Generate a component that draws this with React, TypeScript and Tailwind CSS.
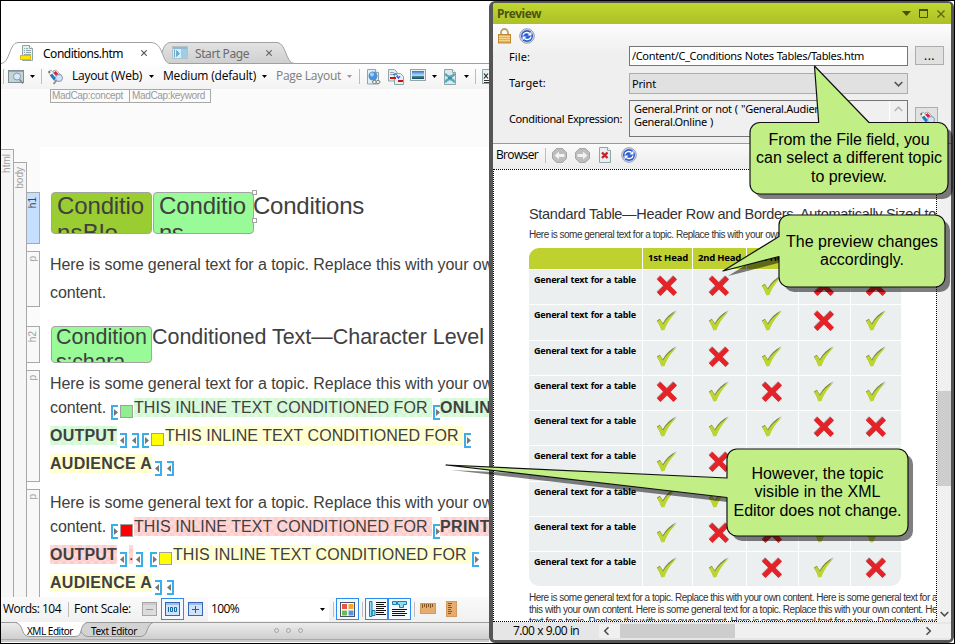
import { useLayoutEffect, useRef, useState } from "react";
import type { ReactNode } from "react";

const NOTO = "font-['Noto_Sans',sans-serif]";
const OPEN = "font-['Open_Sans',sans-serif]";

/* A single line of text whose tracking is computed so that it spans w pixels. */
function Fit({ w, children, className = "" }: { w: number; children: string; className?: string }) {
  const ref = useRef<HTMLSpanElement>(null);
  const [spacing, setSpacing] = useState(0);
  useLayoutEffect(() => {
    if (ref.current) {
      setSpacing((w - ref.current.getBoundingClientRect().width) / children.length);
    }
  }, [w, children]);
  return (
    <span className={`block shrink-0 whitespace-pre ${className}`} style={{ width: w }}>
      <span ref={ref} style={{ letterSpacing: spacing }}>
        {children}
      </span>
    </span>
  );
}

function Caret({ color = "#000", className = "" }: { color?: string; className?: string }) {
  return (
    <svg className={`shrink-0 ${className}`} width="5" height="3" viewBox="0 0 5 3">
      <path d="M0 0h5L2.5 3z" fill={color} />
    </svg>
  );
}

function Sep({ className = "" }: { className?: string }) {
  return <div className={`h-[15px] w-px shrink-0 bg-[#bdbdbd] ${className}`} />;
}

/* ---------- icons ---------- */

function PageIcon() {
  return (
    <svg className="shrink-0" width="14" height="17" viewBox="0 0 14 17">
      <path d="M2.5.5h7l3 3v12h-10z" fill="#e3eff0" stroke="#8fa5a8" />
      <path d="M9.5.5v3h3" fill="#fff" stroke="#8fa5a8" />
      <path d="M4 3.5h1M6 3.5h2M4 5.5h1M6 5.5h5M4 7.5h1M6 7.5h5M4 9.5h7" stroke="#93a6aa" />
      <rect x=".5" y="10.500" width="10" height="4" fill="#ffe600" stroke="#f0b400" />
    </svg>
  );
}

function StartIcon() {
  return (
    <svg className="shrink-0" width="16" height="13" viewBox="0 0 16 13">
      <rect x=".5" y=".5" width="15" height="12" fill="#c5d5dc" stroke="#b4c2c8" />
      <rect x="1" y="1" width="14" height="2" fill="#8fb8d4" />
      <rect x="1" y="3" width="8" height="9" fill="#d5edf8" />
      <rect x="9" y="3" width="6" height="9" fill="#9fcde4" />
      <path d="M2.500 3.500v8M4.500 4.500l3 3-3 3z" fill="#6aaed2" stroke="#6aaed2" />
    </svg>
  );
}

function FindIcon() {
  return (
    <svg className="shrink-0" width="17" height="16" viewBox="0 0 17 16">
      <rect x=".5" y="1.500" width="15" height="12" fill="#c3d3d6" stroke="#7d8f93" />
      <path d="M1 2.500h14" stroke="#94a6aa" />
      <circle cx="9" cy="7.500" r="3.500" fill="#d5eafc" stroke="#8b9aa2" />
      <path d="M11.500 10.500l3.500 4" stroke="#888" strokeWidth="1.600" />
    </svg>
  );
}

function TagsIcon() {
  return (
    <svg className="shrink-0" width="17" height="16" viewBox="0 0 17 16">
      <path d="M1 3l3-2 7 8-3 3z" fill="#fff" stroke="#999" strokeWidth=".8" />
      <path d="M6 2l3-1 6 6-3 3z" fill="#fff" stroke="#999" strokeWidth=".8" />
      <path d="M4 5.500l4 5" stroke="#2179c9" strokeWidth="3" />
      <path d="M7.500 3l4 4" stroke="#e0203a" strokeWidth="3" />
      <circle cx="2.500" cy="3" r="1" fill="#666" />
      <circle cx="12" cy="9" r="3.500" fill="#cfe4fa" stroke="#8c9aab" />
      <path d="M9.500 11.500L6.500 15" stroke="#888" strokeWidth="1.800" />
    </svg>
  );
}

function GlobePageIcon() {
  return (
    <svg className="shrink-0" width="14" height="16" viewBox="0 0 14 16">
      <path d="M.5.500h8l3 3v11.500h-11z" fill="#e3eff0" stroke="#8fa5a8" />
      <path d="M8.500.5v3h3" fill="#fff" stroke="#8fa5a8" />
      <circle cx="6" cy="7" r="4.500" fill="#4a92dc" />
      <circle cx="5" cy="5.500" r="2" fill="#a5d0f7" />
      <ellipse cx="7.500" cy="13" rx="2" ry="1.500" fill="#fff" stroke="#777" />
      <ellipse cx="11" cy="13" rx="2" ry="1.500" fill="#fff" stroke="#777" />
    </svg>
  );
}

function CopyIcon() {
  return (
    <svg className="shrink-0" width="16" height="16" viewBox="0 0 16 16">
      <path d="M.5.500h6l2.500 2.500v9h-8.500z" fill="#e3eff0" stroke="#8fa5a8" />
      <path d="M6.500 4.500h6l3 3v8h-9z" fill="#e3eff0" stroke="#8fa5a8" />
      <path d="M2 8h6v2H2zM10 11h5v2h-5z" fill="#d01111" />
      <path d="M2 3.500h4M2 5.500h4" stroke="#8fa5a8" />
      <path d="M5 6c2-1.500 4-1.500 5.500 3M8.500 7l2 2.500 1.500-2.500" fill="none" stroke="#2443c4" />
    </svg>
  );
}

function ImageIcon() {
  return (
    <svg className="shrink-0" width="16" height="12" viewBox="0 0 16 12">
      <defs>
        <linearGradient id="sky" x1="0" y1="0" x2="0" y2="1">
          <stop offset="0" stopColor="#2f6fe0" />
          <stop offset=".55" stopColor="#bfe0f7" />
          <stop offset=".62" stopColor="#4c9a8c" />
          <stop offset="1" stopColor="#1c3f6a" />
        </linearGradient>
      </defs>
      <rect x=".5" y=".5" width="15" height="11" fill="#e9f0f0" stroke="#8fa5a8" />
      <rect x="2" y="2" width="12" height="8" fill="url(#sky)" />
    </svg>
  );
}

function XPageIcon() {
  return (
    <svg className="shrink-0" width="12" height="16" viewBox="0 0 12 16">
      <path d="M.5.500h8l3 3v12H.5z" fill="#dbe9ea" stroke="#8fa5a8" />
      <path d="M8.500.5v3h3" fill="#fff" stroke="#8fa5a8" />
      <path d="M1.500 4.500c1 4 7.500 4 9 0M1.500 13.500c1-4.500 7.500-4.500 9 0" fill="none" stroke="#55a9bb" strokeWidth="2.200" />
      <path d="M4 9h4" stroke="#3d8fa3" strokeWidth="2" />
    </svg>
  );
}

function XLinesIcon() {
  return (
    <svg className="shrink-0" width="7" height="16" viewBox="0 0 7 16">
      <path d="M.5 15V.5H7M.5 14.500H7" stroke="#8fa5a8" fill="#e3eff0" />
      <path d="M2 4.500l4 5M6 4.500l-4 5" stroke="#222" strokeWidth="1.200" />
      <path d="M2 11.500h5M2 13.500h5" stroke="#333" />
    </svg>
  );
}

function LockIcon() {
  return (
    <svg className="shrink-0" width="13" height="16" viewBox="0 0 13 16">
      <path d="M3 8V4.500a3.500 3.500 0 017 0V8" fill="none" stroke="#b9a06a" strokeWidth="1.800" />
      <rect x=".5" y="6.500" width="12" height="8.500" fill="#e6b04c" stroke="#c08a35" />
      <path d="M1 8.500h11M1 10.500h11M1 12.500h11" stroke="#f6d58c" />
    </svg>
  );
}

function RefreshIcon() {
  return (
    <svg className="shrink-0" width="16" height="16" viewBox="0 0 16 16">
      <circle cx="8" cy="8" r="7.300" fill="#d3d7e2" stroke="#999fae" strokeWidth="1" />
      <circle cx="8" cy="8" r="6" fill="#2d5fd2" />
      <path d="M4 7.500C4.500 4.500 8.500 3.500 10.500 5.500" fill="none" stroke="#fff" strokeWidth="1.500" />
      <path d="M12.500 3.500v4h-4z" fill="#fff" />
      <path d="M12 8.500c-.5 3-4.500 4-6.500 2" fill="none" stroke="#fff" strokeWidth="1.500" />
      <path d="M3.500 12.500v-4h4z" fill="#fff" />
    </svg>
  );
}

function NavIcon({ flip = false }: { flip?: boolean }) {
  return (
    <svg className={`shrink-0 ${flip ? "-scale-x-100" : ""}`} width="15" height="15" viewBox="0 0 15 15">
      <path d="M4.500.5h6l4 4v6l-4 4h-6l-4-4v-6z" fill="#bdbdbd" stroke="#a6a6a6" />
      <path d="M2.500 7.500L7 3.500v2.500h5.500v3H7v2.500z" fill="#f2f2f2" />
    </svg>
  );
}

function StopPageIcon() {
  return (
    <svg className="shrink-0" width="12" height="16" viewBox="0 0 12 16">
      <path d="M.5.500h8l3 3v12H.5z" fill="#e6f0f2" stroke="#8fa5a8" />
      <path d="M8.500.5v3h3" fill="#fff" stroke="#8fa5a8" />
      <path d="M3 5.500l5.500 5.500M8.500 5.500L3 11" stroke="#c8202a" strokeWidth="2.400" />
    </svg>
  );
}

function Cross() {
  return (
    <svg className="-ml-px" width="22" height="22" viewBox="0 0 22 22">
      <path
        d="M4.500 1L11 7.500 17.500 1 21 4.500 14.500 11 21 17.500 17.500 21 11 14.500 4.500 21 1 17.500 7.500 11 1 4.500z"
        fill="#6a1a1a"
        opacity=".45"
        transform="translate(-.5 -.7)"
      />
      <path d="M4.500 1L11 7.500 17.500 1 21 4.500 14.500 11 21 17.500 17.500 21 11 14.500 4.500 21 1 17.500 7.500 11 1 4.500z" fill="#e42328" />
    </svg>
  );
}

function Check() {
  return (
    <svg className="-ml-px" width="22" height="22" viewBox="0 0 22 22">
      <path d="M1 11.500L4 9.500 7 14C10 8.500 14.500 4 21 1 15.500 5.500 11.500 11.500 8.500 20L5.500 20.500C4.500 17 3 14 1 11.500z" fill="#4e5a10" opacity=".7" transform="translate(-.2 -.7)" />
      <path d="M1 11.500L4 9.500 7 14.500C10 9 14.500 5 21 1.500 15.500 6.500 11.500 12 8.500 20L5.500 20.500C4.500 17 3 14 1 11.500z" fill="#bdd52f" />
    </svg>
  );
}

/* ---------- XML editor ---------- */

function DocTabs() {
  return (
    <div className={`relative mt-[41px] h-[22px] ${NOTO} text-[12px] leading-[16px]`}>
      <svg className="absolute left-0 top-0" width="488" height="22" viewBox="1 42 488 22">
        <defs>
          <linearGradient id="tab" x1="0" y1="0" x2="0" y2="1">
            <stop offset="0" stopColor="#e3e3e3" />
            <stop offset="1" stopColor="#cfcfcf" />
          </linearGradient>
        </defs>
        <path d="M162 52.500C164 46 166 42.500 171 42.500H277C286 42.500 286 63.500 294 63.500H170C166 63.500 164 58 162 52.500z" fill="url(#tab)" stroke="#a0a0a0" />
        <path d="M294 63.500H489" stroke="#a0a0a0" />
        <path d="M1 63.500C10 63.500 9 42.500 18 42.500H150C158 42.500 160 48 162 52.500" fill="none" stroke="#a0a0a0" />
      </svg>
      <div className="relative flex h-full items-start">
        <div className="ml-[19px] mt-[3px] flex"><PageIcon /></div>
        <Fit w={80} className="ml-[9px] mt-[4px] text-black">Conditions.htm</Fit>
        <svg className="ml-[18px] mt-[8px]" width="6" height="6" viewBox="0 0 6 6"><path d="M.3.300l5.400 5.400M5.700.300L.300 5.700" stroke="#555" strokeWidth="1.200" /></svg>
        <div className="ml-[25px] mt-[4px] flex"><StartIcon /></div>
        <Fit w={54} className="ml-[7px] mt-[4px] text-[#6b6b6b]">Start Page</Fit>
        <svg className="ml-[17px] mt-[8px]" width="6" height="6" viewBox="0 0 6 6"><path d="M.3.300l5.400 5.400M5.700.300L.300 5.700" stroke="#666" strokeWidth="1.200" /></svg>
      </div>
    </div>
  );
}

function Toolbar() {
  return (
    <div className={`flex h-[25px] items-center overflow-hidden bg-linear-to-b from-white to-[#f2f2f2] ${OPEN} text-[12px] leading-[16px] text-black`}>
      <Sep className="ml-[2px]" />
      <div className="ml-[4px] flex"><FindIcon /></div>
      <Caret className="ml-[5px]" />
      <Sep className="ml-[6px]" />
      <div className="ml-[5px] flex"><TagsIcon /></div>
      <Fit w={70} className="ml-[8px] -mt-px">Layout (Web)</Fit>
      <Caret className="ml-[7px]" />
      <Fit w={93} className="ml-[9px] -mt-px">Medium (default)</Fit>
      <Caret className="ml-[6px]" />
      <Fit w={65} className="ml-[9px] -mt-px text-[#7d7d7d]">Page Layout</Fit>
      <Caret className="ml-[6px]" color="#999" />
      <Sep className="ml-[7px]" />
      <div className="ml-[7px] flex"><GlobePageIcon /></div>
      <div className="ml-[7px] flex"><CopyIcon /></div>
      <div className="-mt-[4px] ml-[6px] flex"><ImageIcon /></div>
      <Caret className="ml-[6px]" />
      <div className="ml-[7px] flex"><XPageIcon /></div>
      <Caret className="ml-[8px]" />
      <Sep className="ml-[6px]" />
      <div className="ml-[6px] flex"><XLinesIcon /></div>
    </div>
  );
}

function BlockTag({ label, className }: { label: string; className: string }) {
  return (
    <div className={`flex w-full justify-center border-[#a8a8a8] pt-[4px] text-[10px] leading-[12px] ${className}`}>
      <span className="h-fit rotate-180 [writing-mode:vertical-rl]">{label}</span>
    </div>
  );
}

function Bracket({ close = false, className = "" }: { close?: boolean; className?: string }) {
  return (
    <svg className={`mt-[11px] shrink-0 ${close ? "-scale-x-100" : ""} ${className}`} width="7" height="15" viewBox="0 0 7 15">
      <path d="M7 1H1v13h6" fill="none" stroke="#3aaeea" strokeWidth="2" />
      <path d="M3 4l4 3.500L3 11z" fill="#777" />
    </svg>
  );
}

function Swatch({ className }: { className: string }) {
  return <div className={`mt-[11px] h-[13px] w-[13px] shrink-0 border border-[#a0a0a0] ${className}`} />;
}

function Mark({ w, text, bold = false, className }: { w: number; text: string; bold?: boolean; className: string }) {
  return (
    <div className={`mt-[4px] h-[19px] shrink-0 leading-[20px] ${bold ? "font-bold" : ""} ${className}`}>
      <Fit w={w}>{text}</Fit>
    </div>
  );
}

const GREEN = "bg-[repeating-conic-gradient(#d3f8d3_0_25%,#dcfadc_0_50%)] bg-[size:8px_8px]";
const YELLOW = "bg-[repeating-conic-gradient(#ffffcc_0_25%,#ffffd9_0_50%)] bg-[size:8px_8px]";
const RED = "bg-[repeating-conic-gradient(#ffcccc_0_25%,#ffd8d8_0_50%)] bg-[size:8px_8px]";

function Chip({ children, className }: { children: ReactNode; className: string }) {
  return <div className={`w-[101px] shrink-0 overflow-hidden rounded-[4px] border border-[#a3a3a3] ${className}`}>{children}</div>;
}

const LINE = "Here is some general text for a topic. Replace this with your own";

function Editor() {
  return (
    <div className="flex h-[508px] overflow-hidden bg-[#fbfbfb] font-['Liberation_Sans',Arial,sans-serif] text-[#a0a0a0]">
      <div className="flex w-[13px] shrink-0 flex-col pt-[60px]">
        <BlockTag label="html" className="flex-1 border-r border-t bg-[#f6f6f6]" />
      </div>
      <div className="flex w-[13px] shrink-0 flex-col pt-[73px]">
        <BlockTag label="body" className="flex-1 border-r border-t bg-[#f6f6f6]" />
      </div>
      <div className="flex w-[13px] shrink-0 flex-col gap-[7px] pt-[103px]">
        <BlockTag label="h1" className="h-[52px] border-y border-r bg-[#c4dfff] text-[#444]" />
        <BlockTag label="p" className="h-[56px] border-y border-r bg-[#f8f8f8]" />
        <BlockTag label="h2" className="mt-[12px] h-[37px] border-y border-r bg-[#f8f8f8]" />
        <BlockTag label="p" className="h-[112px] border-y border-r bg-[#f8f8f8]" />
        <BlockTag label="p" className="flex-1 border-r border-t bg-[#f8f8f8]" />
      </div>
      <div className="flex min-w-0 flex-1 flex-col overflow-hidden">
        <div className="flex h-[58px] shrink-0 items-start pl-[10px] text-[10px] leading-[12px] text-[#999]">
          <div className="h-[14px] w-[80px] border border-[#a8a8a8] pl-[1px]"><Fit w={71}>MadCap:concept</Fit></div>
          <div className="h-[14px] w-[81px] border border-l-0 border-[#a8a8a8] pl-[2px]"><Fit w={73}>MadCap:keyword</Fit></div>
        </div>
        <div className="flex flex-1 flex-col bg-white pl-[10px] pt-[45px] text-[16px] leading-[28px] text-[#404040]">
          <div className="flex h-[42px] shrink-0 pl-px text-[24px] leading-[27px]">
            <Chip className="h-[42px] bg-[#9acd32] pl-[5px]">
              <Fit w={87} className="-mt-px">Conditio</Fit>
              <Fit w={61}>nsBlo</Fit>
            </Chip>
            <div className="relative ml-px">
              <Chip className="h-[42px] bg-[#98fb98] pl-[5px]">
                <Fit w={87} className="-mt-px">Conditio</Fit>
                <Fit w={24}>ns</Fit>
              </Chip>
              <div className="absolute -right-[3px] -top-[2px] h-[5px] w-[5px] border border-[#a3a3a3] bg-white" />
              <div className="absolute -right-[3px] top-[26px] h-[5px] w-[5px] border border-[#a3a3a3] bg-white" />
            </div>
            <Fit w={111} className="-ml-px">Conditions</Fit>
          </div>
          <div className="mt-[17px] flex h-[56px] shrink-0 flex-col">
            <Fit w={452}>{LINE}</Fit>
            <Fit w={56}>content.</Fit>
          </div>
          <div className="mt-[19px] flex h-[37px] shrink-0 pl-px text-[21.500px] leading-[25px]">
            <Chip className="h-[37px] bg-[#98fb98] pl-[4px]">
              <Fit w={91} className="-mt-[2px]">Condition</Fit>
              <Fit w={69}>s:chara</Fit>
            </Chip>
            <Fit w={332} className="-mt-px">Conditioned Text—Character Level</Fit>
          </div>

          <div className="mt-[7px] flex h-[24px] shrink-0"><Fit w={452}>{LINE}</Fit></div>
          <div className="flex h-[28px] shrink-0">
            <Fit w={56}>content.</Fit>
            <Bracket className="ml-[5px]" />
            <Swatch className="ml-[2px] bg-[#90ee90]" />
            <Mark w={298} text="THIS INLINE TEXT CONDITIONED FOR " className={`ml-px ${GREEN}`} />
            <Bracket className="ml-px" />
            <Mark w={62} text="ONLINE" bold className={GREEN} />
          </div>
          <div className="flex h-[28px] shrink-0">
            <Mark w={67} text="OUTPUT" bold className={GREEN} />
            <Bracket close className="ml-[3px]" />
            <Bracket close className="ml-[5px]" />
            <Bracket className="ml-[3px]" />
            <Swatch className="ml-[2px] bg-[#ffff00]" />
            <Mark w={298} text="THIS INLINE TEXT CONDITIONED FOR " className={`ml-px ${YELLOW}`} />
            <Bracket className="ml-px" />
          </div>
          <div className="flex h-[28px] shrink-0">
            <Mark w={102} text="AUDIENCE A" bold className={YELLOW} />
            <Bracket close className="ml-[3px]" />
            <Bracket close className="ml-[5px]" />
          </div>

          <div className="mt-[11px] flex h-[24px] shrink-0"><Fit w={452}>{LINE}</Fit></div>
          <div className="flex h-[28px] shrink-0">
            <Fit w={56}>content.</Fit>
            <Bracket className="ml-[5px]" />
            <Swatch className="ml-[2px] bg-[#ff0000]" />
            <Mark w={298} text="THIS INLINE TEXT CONDITIONED FOR " className={`ml-px ${RED}`} />
            <Bracket className="ml-px" />
            <Mark w={50} text="PRINT" bold className={RED} />
          </div>
          <div className="flex h-[28px] shrink-0">
            <Mark w={67} text="OUTPUT" bold className={RED} />
            <Bracket close className="ml-[3px]" />
            <Mark w={4} text="." className={`ml-[2px] ${RED}`} />
            <Bracket close className="ml-[3px]" />
            <Bracket className="ml-[7px]" />
            <Swatch className="ml-[2px] bg-[#ffff00]" />
            <Mark w={298} text="THIS INLINE TEXT CONDITIONED FOR " className={`ml-px ${YELLOW}`} />
            <Bracket className="ml-px" />
          </div>
          <div className="flex h-[28px] shrink-0">
            <Mark w={102} text="AUDIENCE A" bold className={YELLOW} />
            <Bracket close className="ml-[3px]" />
            <Bracket close className="ml-[5px]" />
          </div>
        </div>
      </div>
    </div>
  );
}

function Toggle({ children, className = "" }: { children: ReactNode; className?: string }) {
  return <div className={`flex h-[22px] w-[23px] shrink-0 items-center justify-center border border-[#2d8cf0] bg-[#f4f9ff] ${className}`}>{children}</div>;
}

function StatusBar() {
  return (
    <div className={`flex h-[25px] shrink-0 items-center bg-linear-to-b from-[#fafafa] to-[#f0f0f0] pb-px ${OPEN} text-[12px] leading-[16px] text-black`}>
      <Fit w={58} className="ml-[2px]">Words: 104</Fit>
      <Sep className="ml-[7px]" />
      <Fit w={57} className="ml-[5px]">Font Scale:</Fit>
      <svg className="ml-[11px] shrink-0" width="15" height="14" viewBox="0 0 15 14">
        <rect x=".5" y=".5" width="14" height="13" fill="#dcdcdc" stroke="#a6a6a6" />
        <path d="M1 2h13" stroke="#bcbcbc" />
        <path d="M4 7.500h7" stroke="#999" />
      </svg>
      <Toggle className="ml-[4px]">
        <svg width="15" height="14" viewBox="0 0 15 14">
          <rect x=".5" y=".5" width="14" height="13" fill="#cfe4fb" stroke="#3767b4" />
          <path d="M1 2h13" stroke="#6e9ad8" />
          <path d="M3.500 5v5M5.500 5.500h2v4h-2zM9.500 5.500h2v4h-2z" fill="none" stroke="#1468a8" />
        </svg>
      </Toggle>
      <svg className="ml-[4px] shrink-0" width="15" height="14" viewBox="0 0 15 14">
        <rect x=".5" y=".5" width="14" height="13" fill="#cfe4fb" stroke="#3767b4" />
        <path d="M1 2h13" stroke="#6e9ad8" />
        <path d="M4 7.500h7M7.500 4v7" stroke="#1468a8" />
      </svg>
      <div className="ml-[5px] flex h-[23px] w-[121px] shrink-0 items-center justify-between bg-white pl-[3px] pr-[4px]">
        <Fit w={28}>100%</Fit>
        <Caret />
      </div>
      <Sep className="ml-[4px]" />
      <Toggle className="ml-[2px]">
        <svg width="15" height="15" viewBox="0 0 15 15">
          <rect x=".5" y=".5" width="14" height="14" fill="#fff" stroke="#44546a" />
          <rect x="2" y="2" width="5" height="5" fill="#e8544e" />
          <rect x="8.500" y="2" width="5" height="5" fill="#f2a72e" />
          <rect x="2" y="8.500" width="5" height="5" fill="#6fbb4b" />
          <rect x="8.500" y="8.500" width="5" height="5" fill="#5b8fe0" />
        </svg>
      </Toggle>
      <Sep className="ml-[3px]" />
      <Toggle className="ml-[2px]">
        <svg width="18" height="16" viewBox="0 0 18 16">
          <path d="M1.500.500h2.500v15h-2.500zM4 9.500h3v5H4z" fill="#8fdcf2" stroke="#1d7fae" />
          <path d="M8 1.500h10M8 3.500h8M8 5.500h10M8 7.500h8M8 9.500h10M8 11.500h8M8 13.500h10" stroke="#111" />
        </svg>
      </Toggle>
      <Toggle>
        <svg width="17" height="16" viewBox="0 0 17 16">
          <path d="M1.500.500h4v3h-4zM6.500.500h9v3h-3v3h-4v-3h-2z" fill="#8fdcf2" stroke="#1d7fae" />
          <path d="M1 8.500h15M1 10.500h13M1 12.500h15M1 14.500h13" stroke="#111" />
        </svg>
      </Toggle>
      <Sep className="ml-[3px]" />
      <svg className="ml-[5px] shrink-0" width="16" height="12" viewBox="0 0 16 12">
        <rect x=".5" y=".5" width="15" height="10" fill="#e5ac70" stroke="#d39a5e" />
        <path d="M2.500 1v4M4.500 1v3M6.500 1v4M8.500 1v3M10.500 1v4M12.500 1v3" stroke="#865420" />
      </svg>
      <svg className="ml-[10px] shrink-0" width="12" height="16" viewBox="0 0 12 16">
        <rect x=".5" y=".5" width="10" height="15" fill="#e5ac70" stroke="#d39a5e" />
        <path d="M2 2.500h4M2 4.500h3M2 6.500h4M2 8.500h3M2 10.500h4M2 12.500h3" stroke="#865420" />
      </svg>
    </div>
  );
}

function ViewTabs() {
  return (
    <div className={`relative h-[20px] shrink-0 border-t border-[#9c9c9c] bg-linear-to-b from-[#ececec] to-[#c9c9c9] ${NOTO} text-[10px] leading-[14px] text-black`}>
      <svg className="absolute -top-px left-0" width="488" height="20" viewBox="1 622 488 20">
        <path d="M74 622.500H153C145 626 149 636.500 140 636.500H88C80 636.500 80 624 74 622.500z" fill="#d3d3d3" stroke="#999" />
        <path d="M16 622C25 626 20 636.500 30 636.500H75C84 636.500 78 626 87 622z" fill="#fff" />
        <path d="M16 622.500C25 626 20 636.500 30 636.500H75C84 636.500 78 626 87 622.500" fill="none" stroke="#999" />
        <path d="M1 639.500H489" stroke="#aaa" />
        <g fill="#ddd" stroke="#a5a5a5">
          <circle cx="276.500" cy="630.500" r="2" />
          <circle cx="288.500" cy="630.500" r="2" />
          <circle cx="300.500" cy="630.500" r="2" />
        </g>
      </svg>
      <div className="relative flex pl-[26px] pt-px">
        <Fit w={46}>XML Editor</Fit>
        <Fit w={46} className="ml-[18px]">Text Editor</Fit>
      </div>
    </div>
  );
}

/* ---------- preview window ---------- */

function Chevron({ className }: { className: string }) {
  return (
    <svg className={`shrink-0 ${className}`} width="9" height="6" viewBox="0 0 9 6">
      <path d="M.7 5L4.500 1.200 8.300 5" fill="none" stroke="currentColor" strokeWidth="1.600" />
    </svg>
  );
}

const ROWS: { h: string; marks: string }[] = [
  { h: "h-[34px]", marks: "xxvxx" },
  { h: "h-[35px]", marks: "vvvxv" },
  { h: "h-[34px]", marks: "vxvvv" },
  { h: "h-[34px]", marks: "xvxvv" },
  { h: "h-[34px]", marks: "vvvxx" },
  { h: "h-[35px]", marks: "vxvvv" },
  { h: "h-[34px]", marks: "vvvvv" },
  { h: "h-[34px]", marks: "vxxvv" },
  { h: "h-[34px]", marks: "vvxvx" },
];

const COLS = "grid grid-cols-[113px_49px_53px_51px_51px_50px] gap-x-px";

function PreviewTable() {
  return (
    <div className={`flex w-[372px] shrink-0 flex-col gap-px overflow-hidden rounded-[10px] ${NOTO} font-bold text-black`}>
      <div className={`${COLS} h-[21px] text-[9.500px] leading-[20px]`}>
        <div className="bg-[#bed12f]" />
        <div className="bg-[#bed12f] pl-[5px]"><Fit w={40}>1st Head</Fit></div>
        <div className="bg-[#bed12f] pl-[5px]"><Fit w={43}>2nd Head</Fit></div>
        <div className="bg-[#bed12f] pl-[5px]"><Fit w={42}>3rd Head</Fit></div>
        <div className="bg-[#bed12f] pl-[5px]"><Fit w={42}>4th Head</Fit></div>
        <div className="bg-[#bed12f] pl-[5px]"><Fit w={42}>5th Head</Fit></div>
      </div>
      {ROWS.map((row, i) => (
        <div key={i} className={`${COLS} ${row.h}`}>
          <div className="bg-[#ebeff0] pl-[5px] pt-[3px] text-[9px] leading-[13px] [word-spacing:.6px]">
            <Fit w={102}>General text for a table</Fit>
          </div>
          {row.marks.split("").map((m, j) => (
            <div key={j} className="flex justify-center bg-[#ebeff0] pt-[5px]">
              {m === "x" ? <Cross /> : <Check />}
            </div>
          ))}
        </div>
      ))}
    </div>
  );
}

function Preview() {
  return (
    <div className={`flex w-[465px] shrink-0 flex-col overflow-hidden rounded-[6px] border-b-[3px] border-l-4 border-r-[3px] border-t-2 border-[#555] bg-[#f0f0f0] ${NOTO} text-[11px] leading-[14px] text-black [word-spacing:.6px]`}>
      <div className="flex h-[21px] shrink-0 items-center bg-linear-to-b from-[#c0d730] to-[#adc025] pl-[4px] pr-[6px] text-[12px] font-bold text-[#4c5510]">
        <Fit w={44}>Preview</Fit>
        <svg className="ml-auto" width="9" height="5" viewBox="0 0 9 5"><path d="M0 0h9L4.500 5z" fill="#45500b" /></svg>
        <svg className="ml-[8px]" width="9" height="9" viewBox="0 0 9 9"><path d="M.5 1v7.500h8V1" fill="none" stroke="#45500b" /><path d="M0 1h9" stroke="#45500b" strokeWidth="2" /></svg>
        <svg className="ml-[9px]" width="8" height="8" viewBox="0 0 8 8"><path d="M.5.500l7 7M7.500.500l-7 7" stroke="#5b6612" strokeWidth="1.300" /></svg>
      </div>
      <div className="flex h-[119px] shrink-0 flex-col bg-linear-to-b from-[#fcfcfc] to-[#efefef] to-25%">
        <div className="flex h-[22px] items-end gap-[8px] pb-[2px] pl-[5px]">
          <LockIcon />
          <RefreshIcon />
        </div>
        <div className="flex h-[21px] items-start pl-[16px]">
          <Fit w={21} className="mt-[4px]">File:</Fit>
          <div className="ml-[99px] h-[20px] w-[279px] border border-[#767676] bg-white pl-[2px] pt-[2px]">
            <Fit w={232}>/Content/C_Conditions Notes Tables/Tables.htm</Fit>
          </div>
          <div className="ml-[7px] h-[19px] w-[29px] border border-[#adadad] bg-[#e1e1e1] pl-[8px] pt-[2px] text-[12px]">
            <Fit w={11}>...</Fit>
          </div>
        </div>
        <div className="mt-[6px] flex h-[21px] pl-[16px]">
          <Fit w={37} className="mt-[3px]">Target:</Fit>
          <div className="ml-[83px] flex h-[21px] w-[279px] items-center justify-between border border-[#adadad] bg-[#e1e1e1] pl-[2px] pr-[4px]">
            <Fit w={24}>Print</Fit>
            <Chevron className="rotate-180 text-[#555]" />
          </div>
        </div>
        <div className="mt-[6px] flex h-[37px] pl-[16px]">
          <Fit w={113} className="mt-[12px]">Conditional Expression:</Fit>
          <div className="ml-[7px] flex h-[37px] w-[279px] justify-between border border-[#767676] bg-[#f0f0f0] pl-[4px] leading-[13px]">
            <div className="pt-[1px]">
              <Fit w={211}>General.Print or not ( "General.Audience A"</Fit>
              <Fit w={79}>General.Online )</Fit>
            </div>
            <div className="w-[18px] border-l border-white pl-[4px] pt-[5px] text-[#b5b5b5]"><Chevron className="" /></div>
          </div>
          <div className="ml-[7px] mt-[7px] h-[20px] w-[23px] border border-[#adadad] bg-[#e1e1e1] pl-[3px] pt-[3px]">
            <TagsIcon />
          </div>
        </div>
      </div>
      <div className="flex h-[26px] shrink-0 items-center border-t border-[#9a9a9a] bg-linear-to-b from-[#fafafa] to-[#ececec] pb-[3px] pl-[3px]">
        <Fit w={42} className={`${OPEN} text-[12px]`}>Browser</Fit>
        <Sep className="ml-[7px]" />
        <div className="ml-[6px] flex"><NavIcon /></div>
        <div className="ml-[8px] flex"><NavIcon flip /></div>
        <div className="ml-[9px] flex"><StopPageIcon /></div>
        <div className="ml-[10px] flex"><RefreshIcon /></div>
      </div>
      <div className="flex min-h-0 flex-1">
        <div className="flex w-[444px] shrink-0 flex-col overflow-hidden border border-dotted border-black bg-white pl-[35px] font-['Liberation_Sans',Arial,sans-serif] text-[#333] [word-spacing:0px]">
          <Fit w={407} className="mt-[34px] text-[14.500px] leading-[20px]">Standard Table—Header Row and Borders, Automatically Sized to</Fit>
          <Fit w={253} className="mt-[4px] text-[10px] leading-[14px]">{LINE}</Fit>
          <div className="h-[6px] shrink-0" />
          <PreviewTable />
          <div className="mt-[6px] text-[10px] leading-[12px]">
            <Fit w={408}>Here is some general text for a topic. Replace this with your own content. Here is some general text for a</Fit>
            <Fit w={408}>this with your own content. Here is some general text for a topic. Replace this with your own content. He</Fit>
            <Fit w={408}>text for a topic. Replace this with your own content. Here is some general text for a topic. Replace this wi</Fit>
          </div>
        </div>
        <div className="flex flex-1 flex-col items-center bg-[#f0f0f0]">
          <div className="mt-[222px] h-[95px] w-full bg-[#cdcdcd]" />
          <Chevron className="mb-[5px] mt-auto rotate-180 text-[#505050]" />
        </div>
      </div>
      <div className={`flex h-[18px] shrink-0 items-center bg-[#e6e6e6] pl-[20px] ${OPEN} text-[12px]`}>
        <Fit w={66}>7.00 x 9.00 in</Fit>
        <div className="ml-[20px] flex h-[14px] flex-1 items-center bg-[#f0f0f0]">
          <Chevron className="ml-[3px] -rotate-90 text-[#505050]" />
          <div className="ml-[9px] h-[14px] w-[115px] bg-[#cdcdcd]" />
          <Chevron className="ml-auto mr-[18px] rotate-90 text-[#505050]" />
        </div>
      </div>
    </div>
  );
}

/* ---------- annotations over the windows ---------- */

const BUBBLES = [
  "M760 122.500H818.700L814.500 66 869 122.500H938A10 10 0 01948 132.500V184A10 10 0 01938 194H760A10 10 0 01750 184V132.500A10 10 0 01760 122.500z",
  "M789 215H935A10 10 0 01945 225V277A10 10 0 01935 287H789A10 10 0 01779 277V256.500L723 271 779 236.500V225A10 10 0 01789 215z",
  "M737 449H898A10 10 0 01908 459V526A10 10 0 01898 536H737A10 10 0 01727 526V497.500L446 465 727 478V459A10 10 0 01737 449z",
];
const SHADOWS = [
  "M760 122.500H938A10 10 0 01948 132.500V184A10 10 0 01938 194H760A10 10 0 01750 184V132.500A10 10 0 01760 122.500z",
  BUBBLES[1],
  BUBBLES[2],
];

function Bubble({ className, lines }: { className: string; lines: [string, number][] }) {
  return (
    <div className={`absolute flex flex-col items-center ${className}`}>
      {lines.map(([text, w]) => (
        <Fit key={text} w={w}>{text}</Fit>
      ))}
    </div>
  );
}

function Annotations() {
  return (
    <div className="absolute inset-0 font-['Liberation_Sans',Arial,sans-serif] text-[16px] leading-[18.400px] text-black">
      <svg className="absolute inset-0" width="955" height="644" viewBox="0 0 955 644">
        {BUBBLES.map((d, i) => (
          <g key={i}>
            <path d={SHADOWS[i]} fill="#000" opacity=".5" transform="translate(5 5)" />
            <path d={d} fill="#c2ef85" stroke="#111" strokeWidth="1.200" strokeLinejoin="round" />
          </g>
        ))}
      </svg>
      <Bubble className="left-[750px] top-[131px] w-[198px]" lines={[["From the File field, you", 161], ["can select a different topic", 186], ["to preview.", 76]]} />
      <Bubble className="left-[779px] top-[233px] w-[166px]" lines={[["The preview changes", 152], ["accordingly.", 84]]} />
      <Bubble className="left-[727px] top-[465px] w-[181px]" lines={[["However, the topic", 132], ["visible in the XML", 126], ["Editor does not change.", 168]]} />
    </div>
  );
}

export default function App() {
  return (
    <div className="relative h-[644px] w-[955px] overflow-hidden border border-black bg-white">
      <div className="flex h-full">
        <div className="flex w-[488px] shrink-0 flex-col">
          <DocTabs />
          <Toolbar />
          <Editor />
          <StatusBar />
          <ViewTabs />
        </div>
        <Preview />
      </div>
      <div className="absolute -left-px -top-px h-[644px] w-[955px]">
        <Annotations />
      </div>
    </div>
  );
}
